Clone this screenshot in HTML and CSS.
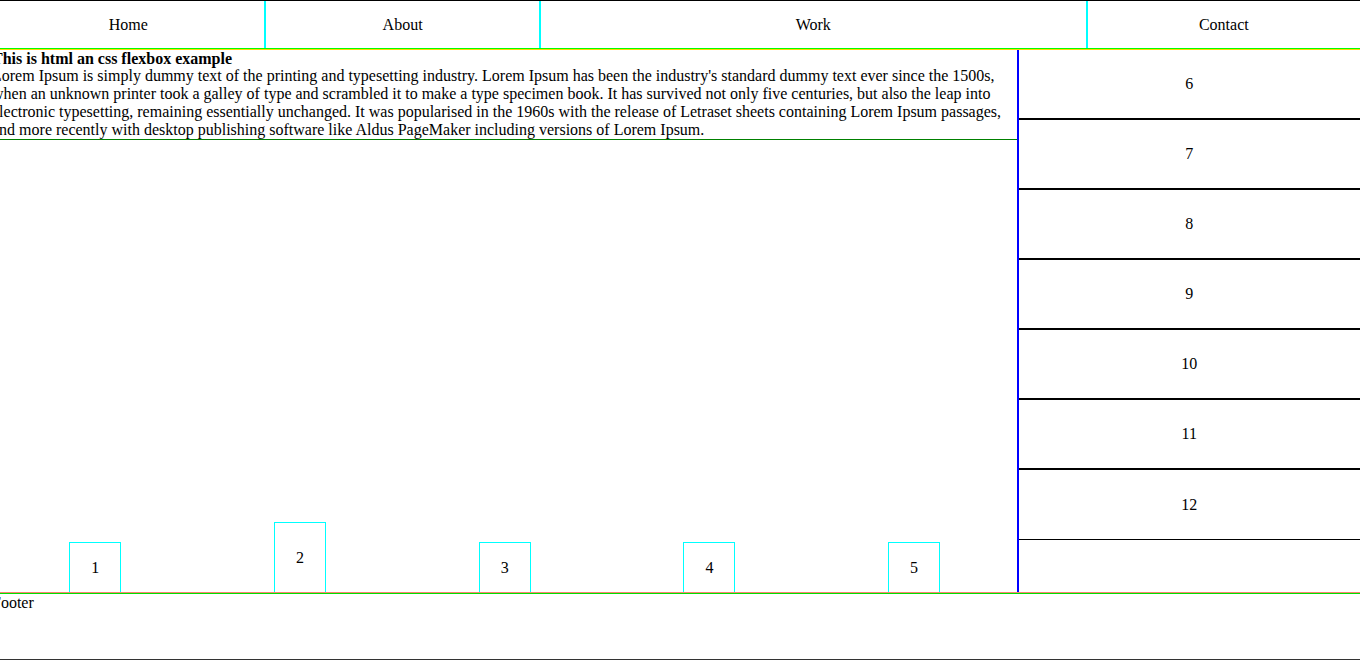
FILE: index.html
```html
<!DOCTYPE html>
<html lang="en">
<head>
<meta charset="utf-8">
<title>Flexbox example</title>
<link rel="stylesheet" href="styles.css">
</head>
<body>
<div class="page">
  <nav class="nav">
    <div class="nav-item">Home</div>
    <div class="nav-item">About</div>
    <div class="nav-item nav-wide">Work</div>
    <div class="nav-item">Contact</div>
  </nav>
  <main class="main">
    <section class="content">
      <article class="article">
        <div class="title">This is html an css flexbox example</div>
        <p class="text">Lorem Ipsum is simply dummy text of the printing and typesetting industry. Lorem Ipsum has been the industry's standard dummy text ever since the 1500s, when an unknown printer took a galley of type and scrambled it to make a type specimen book. It has survived not only five centuries, but also the leap into electronic typesetting, remaining essentially unchanged. It was popularised in the 1960s with the release of Letraset sheets containing Lorem Ipsum passages, and more recently with desktop publishing software like Aldus PageMaker including versions of Lorem Ipsum.</p>
      </article>
      <div class="boxes">
        <div class="box">1</div>
        <div class="box box-tall">2</div>
        <div class="box">3</div>
        <div class="box">4</div>
        <div class="box">5</div>
      </div>
    </section>
    <aside class="side">
      <div class="side-item">6</div>
      <div class="side-item">7</div>
      <div class="side-item">8</div>
      <div class="side-item">9</div>
      <div class="side-item">10</div>
      <div class="side-item">11</div>
      <div class="side-item side-last">12</div>
    </aside>
  </main>
  <footer class="footer">Footer</footer>
</div>
</body>
</html>
```
FILE: styles.css
```css
html, body {
  margin: 0;
  padding: 0;
  background: #fff;
  overflow: hidden;
}
body {
  font-family: "Liberation Serif", "Times New Roman", serif;
  font-size: 16px;
  line-height: 18px;
  color: #000;
  width: 1366px;
  height: 660px;
}
.page {
  margin-left: -8px;
  width: 1368px;
  border-top: 1px solid #000;
}
.nav {
  display: flex;
  height: 48px;
  box-sizing: border-box;
  border-bottom: 1px solid #00ff00;
}
.nav-item {
  flex: 1 1 0;
  display: flex;
  align-items: center;
  justify-content: center;
  border-right: 2px solid #00ffff;
}
.nav-item:last-child {
  border-right: none;
}
.nav-wide {
  flex: 2 1 0;
}
.main {
  display: flex;
  height: 544px;
  box-sizing: border-box;
  border-top: 1px solid #ffd700;
  border-bottom: 1px solid #fa8072;
}
.content {
  flex: 3 1 0;
  display: flex;
  flex-direction: column;
  border-right: 2px solid #0000ff;
}
.article {
  border-bottom: 1px solid #008000;
}
.title {
  font-weight: bold;
  line-height: 17px;
}
.text {
  margin: 0;
}
.boxes {
  flex: 1;
  display: flex;
  justify-content: space-around;
  align-items: flex-end;
  padding-left: 1px;
}
.box {
  width: 50px;
  height: 49px;
  border: 1px solid #00ffff;
  border-bottom: none;
  display: flex;
  align-items: center;
  justify-content: center;
}
.box-tall {
  height: 69px;
}
.side {
  flex: 1 1 0;
  display: flex;
  flex-direction: column;
}
.side-item {
  height: 70px;
  box-sizing: border-box;
  border-bottom: 2px solid #000;
  display: flex;
  align-items: center;
  justify-content: center;
}
.side-last {
  border-bottom: 1px solid #000;
}
.footer {
  height: 65px;
  border-top: 1px solid #00e000;
  border-bottom: 1px solid #333;
}
```
